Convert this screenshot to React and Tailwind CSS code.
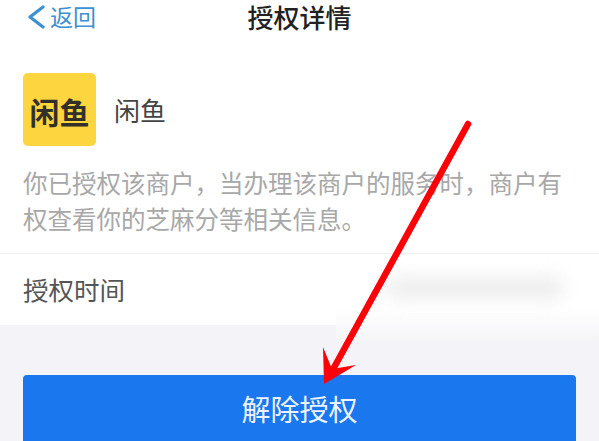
import React from "react";

const cjk = { fontFamily: '"Noto Sans CJK SC", "Noto Sans", sans-serif' };

const App = () => {
  return (
    <div
      className="relative flex h-[441px] w-[599px] flex-col overflow-hidden bg-[#f4f4f8]"
      style={cjk}
    >
      <div className="bg-white">
        <div className="grid h-[33px] grid-cols-[1fr_auto_1fr] items-center pl-[27px] pr-[27px]">
          <div className="flex items-center gap-[4px] text-[#3d90d2]">
            <svg className="h-[24px] w-[19px]" viewBox="0 0 19 24" fill="none">
              <path
                d="M16 2 3 12l13 10"
                stroke="currentColor"
                strokeWidth="3.2"
                strokeLinecap="round"
                strokeLinejoin="round"
              />
            </svg>
            <span className="text-[23px] leading-none">返回</span>
          </div>
          <h1 className="text-[26px] font-medium leading-none text-[#222]">授权详情</h1>
          <div />
        </div>

        <div className="flex items-center gap-[18px] px-[23px] pt-[40px]">
          <div className="flex h-[73px] w-[73px] items-center justify-center rounded-[5px] bg-[#fdd53e] pt-[3px] text-[30px] font-bold leading-none text-[#33302a]">
            闲鱼
          </div>
          <span className="text-[26px] leading-none text-[#444]">闲鱼</span>
        </div>

        <p className="px-[23px] pb-[16px] pt-[19px] text-[24.5px] leading-[36px] text-[#a8a8a8]">
          你已授权该商户，当办理该商户的服务时，商户有权查看你的芝麻分等相关信息。
        </p>

        <div className="flex h-[72px] items-center border-t border-[#f0f0f0] px-[23px] text-[25.5px] text-[#555]">
          授权时间
        </div>
      </div>

      <div className="mx-[23px] mt-[50px] flex h-[66px] flex-none items-center justify-center rounded-t-[4px] bg-[#1b77ee] text-[29px] leading-none text-[#eaf3fe]">
        解除授权
      </div>

      {/* smudge over the blurred-out date */}
      <div className="absolute left-[336px] top-[254px] h-[90px] w-[263px] bg-gradient-to-b from-white from-60% to-[#f4f4f8]" />
      <div className="absolute left-[385px] top-[278px] h-[20px] w-[180px] rounded-full bg-[#ececec] blur-[9px]" />

      {/* red annotation arrow */}
      <svg className="absolute inset-0 h-[441px] w-[599px]" viewBox="0 0 599 441" fill="none">
        <path d="M468 124 331 373" stroke="#fb0208" strokeWidth="6.5" strokeLinecap="round" />
        <path d="M324 384 323 347 332 369 356 365Z" fill="#fb0208" />
      </svg>
    </div>
  );
};

export default App;
